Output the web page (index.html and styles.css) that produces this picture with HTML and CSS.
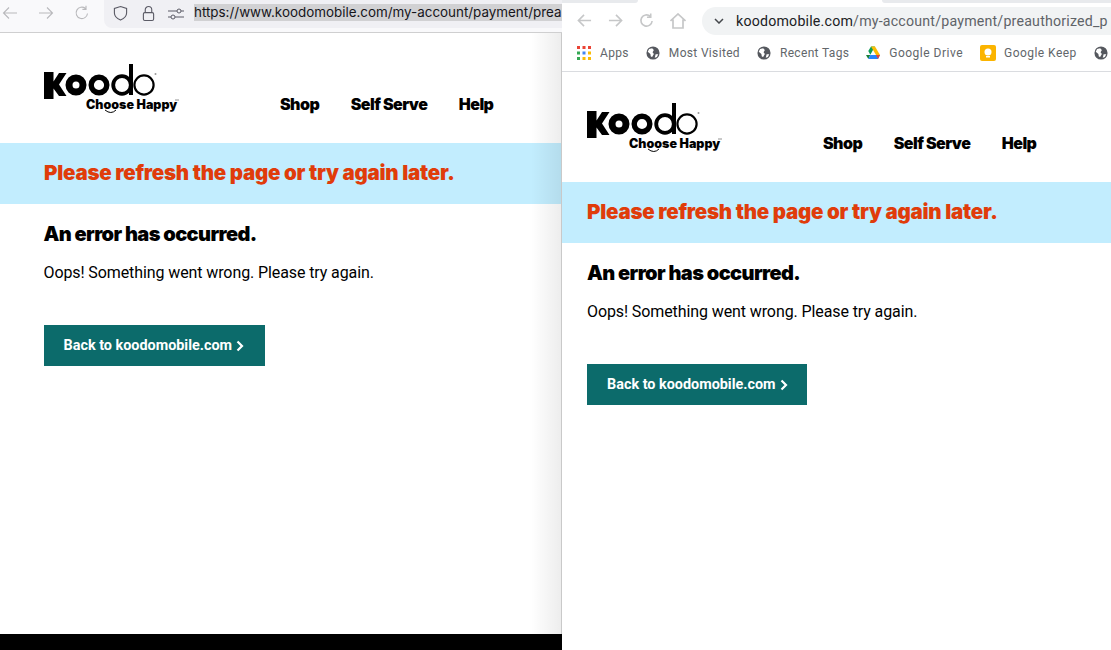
FILE: index.html
```html
<!DOCTYPE html>
<html lang="en">
<head>
<meta charset="utf-8">
<title>Koodo error page in two browsers</title>
<link rel="stylesheet" href="styles.css">
</head>
<body>
<svg class="defs" width="0" height="0" aria-hidden="true">
  <symbol id="logo" viewBox="0 0 136 52">
    <path d="M0 8h9.500v9.500L15 9h7.500L15 20.500 22.500 32H15l-5.500-7.500V35H0z" fill="#000"/>
    <circle cx="32" cy="21" r="7" fill="none" stroke="#000" stroke-width="7"/>
    <circle cx="55" cy="21" r="7.800" fill="none" stroke="#000" stroke-width="5.400"/>
    <circle cx="78" cy="21" r="8.800" fill="none" stroke="#000" stroke-width="3.800"/>
    <rect x="85" y="0" width="4" height="31" fill="#000"/>
    <circle cx="100" cy="21" r="9.600" fill="none" stroke="#000" stroke-width="2.200"/>
    <circle cx="111.500" cy="10" r="1" fill="#999"/>
    <path d="M61 46q6 5 11 0" fill="none" stroke="#000" stroke-width="1"/>
    <path d="M131 36h4" stroke="#777" stroke-width=".8"/>
  </symbol>
  <symbol id="globe" viewBox="0 0 16 16">
    <circle cx="8" cy="8" r="7.500" fill="#55585e"/>
    <path d="M3.500 3.500L7 2.500l2 2-1.500 2.500L9 9 7 12.500 5.500 12 5 9 2 6.500zM11 9.500h3l-1.500 3-2.500 1z" fill="#fff"/>
  </symbol>
</svg>
<div class="desktop">
  <section class="window window-back">
    <header class="fx-bar">
      <svg class="ico" viewBox="0 0 16 16"><path d="M15 8H1.500M7 2.500L1.500 8 7 13.500"/></svg>
      <svg class="ico" viewBox="0 0 16 16"><path d="M1 8h13.500M9 2.500L14.500 8 9 13.500"/></svg>
      <svg class="ico" viewBox="0 0 16 16"><path d="M13.500 8.500A5.700 5.700 0 1 1 11.500 3.500M12 0.800v3.600H8.400"/></svg>
      <div class="fx-url">
        <svg class="ico-dark shield" viewBox="0 0 16 17"><path d="M8 1l6.500 2v5c0 3.500-3 6-6.500 7.500C4.500 14 1.500 11.500 1.500 8V3z"/></svg>
        <svg class="ico-dark lock" viewBox="0 0 14 17"><rect x="1.500" y="7.500" width="11" height="8.500" rx="1.500"/><path d="M3.500 7.500V4.500a3.500 3.500 0 0 1 7 0v3"/></svg>
        <svg class="ico-dark perm" viewBox="0 0 16 12"><path d="M0 3h9M13 3h3M0 9h3M7 9h9"/><circle cx="11" cy="3" r="2"/><circle cx="5" cy="9" r="2"/></svg>
        <span class="fx-address">https://www.koodomobile.com/my-account/payment/prea</span>
      </div>
    </header>
    <main class="page">
      <div class="site-head">
        <a class="logo"><svg class="logo-svg"><use href="#logo"/></svg><span class="tagline">Choose Happy</span></a>
        <nav class="site-nav"><a>Shop</a><a>Self Serve</a><a>Help</a></nav>
      </div>
      <div class="notice"><p>Please refresh the page or try again later.</p></div>
      <div class="content">
        <h2>An error has occurred.</h2>
        <p>Oops! Something went wrong. Please try again.</p>
        <a class="btn">Back to koodomobile.com <svg class="chev" viewBox="0 0 8 12"><path d="M1.500 1.500L6 6l-4.500 4.500"/></svg></a>
      </div>
    </main>
    <div class="black-strip"></div>
  </section>

  <section class="window window-front">
    <div class="tabs"><span class="tab-a"></span><span class="tab-b"></span></div>
    <header class="ch-bar">
      <svg class="ico-ch" viewBox="0 0 16 16"><path d="M15 8H1.500M7.500 2L1.500 8l6 6"/></svg>
      <svg class="ico-ch" viewBox="0 0 16 16"><path d="M1 8h13.500M8.500 2l6 6-6 6"/></svg>
      <svg class="ico-ch" viewBox="0 0 16 16"><path d="M14 8.500A6 6 0 1 1 12 3.500M12.500 0.500v4h-4"/></svg>
      <svg class="ico-ch home" viewBox="0 0 16 16"><path d="M0.500 8L8 1l7.500 7M3 6.500V15h10V6.500"/></svg>
      <div class="ch-url">
        <svg class="caret" viewBox="0 0 10 6"><path d="M1 1l4 4 4-4"/></svg>
        <span class="ch-address"><b>koodomobile.com</b>/my-account/payment/preauthorized_p</span>
      </div>
    </header>
    <div class="bookmarks">
      <span class="bm">
        <svg class="bm-ico" viewBox="0 0 14 14">
          <rect width="3" height="3" fill="#ea4335"/><rect x="5.500" width="3" height="3" fill="#ea4335"/><rect x="11" width="3" height="3" fill="#ea4335"/>
          <rect y="5.500" width="3" height="3" fill="#34a853"/><rect x="5.500" y="5.500" width="3" height="3" fill="#4285f4"/><rect x="11" y="5.500" width="3" height="3" fill="#fbbc04"/>
          <rect y="11" width="3" height="3" fill="#34a853"/><rect x="5.500" y="11" width="3" height="3" fill="#fbbc04"/><rect x="11" y="11" width="3" height="3" fill="#fbbc04"/>
        </svg>Apps</span>
      <span class="bm"><svg class="bm-ico"><use href="#globe"/></svg>Most Visited</span>
      <span class="bm"><svg class="bm-ico"><use href="#globe"/></svg>Recent Tags</span>
      <span class="bm bm-wide">
        <svg class="bm-ico" viewBox="0 0 14 13">
          <path d="M5 0h4l-4.700 8.200L2.300 4.500z" fill="#0f9d58"/>
          <path d="M5 0h4l5 8.500H10z" fill="#fbbc04"/>
          <path d="M0 8.500h4.300L2.300 12.500z" fill="#188038"/>
          <path d="M4.300 8.500H14l-2 4H2.300z" fill="#2684fc"/>
          <path d="M10 8.500h4l-2 4z" fill="#ea4335"/>
        </svg>Google Drive</span>
      <span class="bm bm-wide bm-keep">
        <svg class="bm-ico keep" viewBox="0 0 16 16">
          <rect width="16" height="16" rx="2" fill="#fbb400"/>
          <circle cx="8" cy="7" r="3.500" fill="#fff"/>
          <rect x="6" y="11" width="4" height="1.500" fill="#fff"/>
        </svg>Google Keep</span>
      <span class="bm"><svg class="bm-ico"><use href="#globe"/></svg></span>
    </div>
    <main class="page">
      <div class="site-head">
        <a class="logo"><svg class="logo-svg"><use href="#logo"/></svg><span class="tagline">Choose Happy</span></a>
        <nav class="site-nav"><a>Shop</a><a>Self Serve</a><a>Help</a></nav>
      </div>
      <div class="notice"><p>Please refresh the page or try again later.</p></div>
      <div class="content">
        <h2>An error has occurred.</h2>
        <p>Oops! Something went wrong. Please try again.</p>
        <a class="btn">Back to koodomobile.com <svg class="chev" viewBox="0 0 8 12"><path d="M1.500 1.500L6 6l-4.500 4.500"/></svg></a>
      </div>
    </main>
  </section>
</div>
</body>
</html>
```
FILE: styles.css
```css
* { box-sizing: border-box; }
html, body { margin: 0; height: 100%; overflow: hidden; background: #fff; }
body { font-family: Roboto, "Liberation Sans", sans-serif; color: #000; }
.defs { position: absolute; }

.desktop { display: flex; width: 1111px; height: 650px; }
.window { display: flex; flex-direction: column; height: 650px; overflow: hidden; background: #fff; }
.window-back { width: 562px; flex: none; }
.window-front { flex: 1; min-width: 0; }

/* Firefox toolbar */
.fx-bar { height: 33px; flex: none; display: flex; align-items: flex-start; background: #f9f9fb; border-bottom: 1px solid #cfcfd0; padding: 5px 0 0 2px; gap: 20px; }
.ico { width: 16px; height: 16px; flex: none; fill: none; stroke: #b9b9bc; stroke-width: 1.1; }
.fx-url { margin: -5px 0 0 -6px; height: 28px; flex: 1; min-width: 0; display: flex; align-items: flex-start; background: #f0f0f4; border-radius: 0 0 0 8px; padding: 5px 0 0 9px; overflow: hidden; }
.ico-dark { flex: none; fill: none; stroke: #5b5b66; stroke-width: 1.2; }
.shield { width: 15px; height: 17px; margin-right: 14px; }
.lock { width: 13px; height: 17px; margin-right: 13px; }
.perm { width: 16px; height: 12px; margin: 3px 10px 0 0; stroke-width: 1; }
.fx-address { margin-top: -1px; background: #d1d1d3; color: #15141a; font: 13.4px/17px Inter, Roboto, sans-serif; white-space: nowrap; flex: 1; }

/* Chrome toolbar */
.tabs { height: 3px; flex: none; display: flex; justify-content: space-between; }
.tab-a { width: 76px; background: #e8eaed; border-radius: 0 0 8px 0; }
.tab-b { width: 229px; background: #e8eaed; border-radius: 0 0 0 8px; }
.ch-bar { height: 35px; flex: none; display: flex; align-items: center; padding: 0 0 0 15px; gap: 16px; }
.ico-ch { width: 15px; height: 15px; flex: none; fill: none; stroke: #c6c7c8; stroke-width: 1.7; }
.ch-bar .home { width: 16px; height: 16px; }
.ch-url { flex: 1; min-width: 0; height: 28px; display: flex; align-items: center; background: #f1f3f4; border-radius: 14px 0 0 14px; padding-left: 12px; }
.caret { width: 10px; height: 6px; flex: none; fill: none; stroke: #45484c; stroke-width: 1.5; margin-right: 12px; }
.ch-address { font: 14.2px/18px Roboto, sans-serif; color: #5f6368; white-space: nowrap; letter-spacing: .2px; }
.ch-address b { font-weight: 400; color: #202124; }
.bookmarks { height: 34px; flex: none; display: flex; align-items: center; gap: 17px; padding: 0 0 4px 15px; border-bottom: 1px solid #dadce0; }
.bm { display: inline-flex; align-items: center; gap: 9px; font: 12px/16px Roboto, sans-serif; letter-spacing: .33px; color: #62666a; white-space: nowrap; }
.bm-wide { letter-spacing: .5px; }
.bm-keep { gap: 8px; letter-spacing: .45px; }
.bm-ico { width: 14px; height: 14px; flex: none; }
.bm-ico.keep { width: 16px; height: 16px; }

/* Koodo page */
.page { position: relative; flex: 1; min-height: 0; background: #fff; }
.window-back .page::after { content: ""; position: absolute; top: 0; bottom: 0; right: 0; width: 30px; background: linear-gradient(to right, rgba(0,0,0,0), rgba(0,0,0,.07)); border-right: 1px solid #c9c9c9; }
.site-head { height: 110px; display: flex; align-items: flex-start; padding: 31px 0 0 44px; }
.window-front .site-head, .window-front .notice, .window-front .content { padding-left: 25px; }
.logo { display: block; position: relative; width: 136px; flex: none; }
.logo-svg { display: block; width: 136px; height: 52px; }
.tagline { position: absolute; left: 42px; top: 33px; font: 900 12.5px/15px Inter, sans-serif; letter-spacing: 0; white-space: nowrap; }
.site-nav { display: flex; gap: 31.5px; margin: 31px 0 0 100px; font: 900 16px/19px Inter, sans-serif; letter-spacing: -.55px; white-space: nowrap; }
.notice { height: 61px; display: flex; align-items: center; padding: 0 0 2px 44px; background: #c2edfe; }
.notice p { margin: 0; color: #e03c0a; font: 900 20.5px/26px Inter, sans-serif; letter-spacing: -.25px; white-space: nowrap; }
.content { padding: 18px 0 0 43.5px; }
.content h2 { margin: 0; font: 900 20px/24px Inter, sans-serif; letter-spacing: -.6px; white-space: nowrap; }
.content p { margin: 16px 0 0; font: 400 16px/22px Roboto, sans-serif; letter-spacing: -.1px; white-space: nowrap; }
.btn { display: inline-flex; align-items: center; gap: 4px; height: 41px; width: 221px; margin-top: 41px; padding-left: 20px; background: #0c6b6b; color: #fff; font: 700 14.4px/18px Roboto, sans-serif; white-space: nowrap; }
.window-front .btn { width: 220px; }
.chev { width: 8px; height: 12px; flex: none; fill: none; stroke: #fff; stroke-width: 2.2; }
.black-strip { height: 16px; flex: none; background: #000; position: relative; z-index: 1; }
```
